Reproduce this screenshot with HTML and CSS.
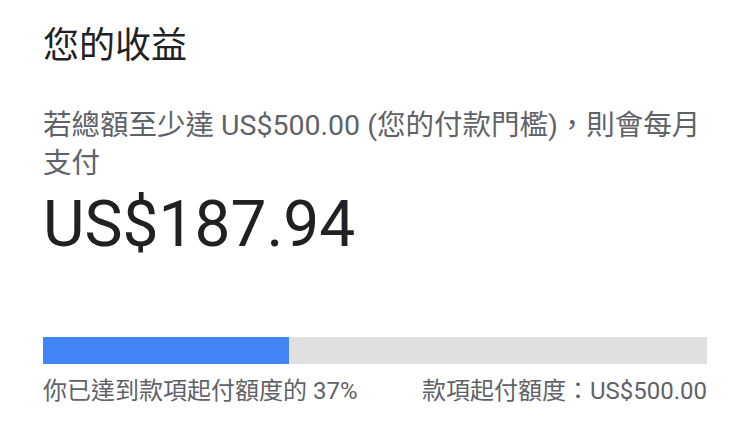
FILE: index.html
```html
<!DOCTYPE html>
<html lang="zh-Hant">
<head>
  <meta charset="UTF-8">
  <meta name="viewport" content="width=device-width, initial-scale=1.0">
  <title>您的收益</title>
  <link rel="stylesheet" href="styles.css">
</head>
<body>

  <section class="earnings">
    <h2 class="earnings-title">您的收益</h2>

    <p class="earnings-note">若總額至少達 US$500.00 (您的付款門檻)，則會每月支付</p>

    <div class="earnings-amount">US$187.94</div>

    <div class="progress">
      <div class="progress-fill" style="width: 37%"></div>
    </div>

    <div class="progress-labels">
      <span>你已達到款項起付額度的 37%</span>
      <span>款項起付額度：US$500.00</span>
    </div>
  </section>

</body>
</html>
```

FILE: styles.css
```css
* {
  box-sizing: border-box;
}

body {
  margin: 0;
  background: #fff;
  font-family: Roboto, "Noto Sans CJK TC", sans-serif;
}

.earnings {
  padding: 23px 32px 0 43px;
}

.earnings-title {
  margin: 0;
  font-size: 36px;
  line-height: 46px;
  font-weight: 400;
  color: #202124;
}

.earnings-note {
  margin: 38px 0 0;
  font-size: 28.5px;
  line-height: 38px;
  color: #5f6368;
}

.earnings-amount {
  margin-top: 6px;
  font-size: 64px;
  line-height: 72px;
  color: #202124;
}

.progress {
  margin-top: 76px;
  height: 27px;
  background: #e0e0e0;
}

.progress-fill {
  height: 100%;
  background: #4285f4;
}

.progress-labels {
  display: flex;
  justify-content: space-between;
  margin-top: 11px;
  font-size: 24px;
  line-height: 32px;
  color: #5f6368;
}
```
